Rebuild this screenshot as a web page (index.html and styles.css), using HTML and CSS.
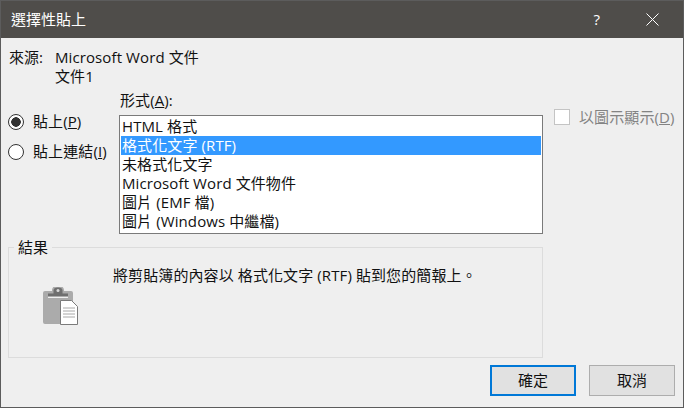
FILE: index.html
```html
<!DOCTYPE html>
<html lang="zh-Hant">
<head>
<meta charset="utf-8">
<title>選擇性貼上</title>
<link rel="stylesheet" href="styles.css">
</head>
<body>
<div class="dialog">
  <header class="titlebar">
    <span class="title">選擇性貼上</span>
    <span class="help">?</span>
    <svg class="close" width="13" height="13" viewBox="0 0 13 13"><path d="M.5.5l12 12M12.500.5l-12 12" stroke="#fff" stroke-width="1" fill="none"/></svg>
  </header>
  <main class="content">
    <div class="source">
      <span class="source-label">來源:</span>
      <div class="source-value"><div>Microsoft Word 文件</div><div>文件1</div></div>
    </div>
    <div class="middle">
      <div class="radios">
        <label class="radio-row"><span class="radio checked"></span><span>貼上(<u>P</u>)</span></label>
        <label class="radio-row"><span class="radio"></span><span>貼上連結(<u>I</u>)</span></label>
      </div>
      <div class="format">
        <div class="format-label">形式(<u>A</u>):</div>
        <ul class="listbox">
          <li>HTML 格式</li>
          <li class="selected">格式化文字 (RTF)</li>
          <li>未格式化文字</li>
          <li>Microsoft Word 文件物件</li>
          <li>圖片 (EMF 檔)</li>
          <li>圖片 (Windows 中繼檔)</li>
        </ul>
      </div>
      <div class="icon-option"><span class="checkbox"></span><span>以圖示顯示(<u>D</u>)</span></div>
    </div>
    <section class="result">
      <span class="legend">結果</span>
      <svg class="clip" width="36" height="38" viewBox="0 0 36 38">
        <path d="M3 4h7V3a5 4 0 0 1 12 0v1h7a2 2 0 0 1 2 2v29a2 2 0 0 1-2 2H3a2 2 0 0 1-2-2V6a2 2 0 0 1 2-2z" fill="#ababab"/>
        <path d="M6 9V6.500h5.500V3.500a4.500 3 0 0 1 9 0v3H26V9z" fill="#6f6f6f"/>
        <path d="M6 10.500h20" stroke="#efefef" stroke-width="1"/>
        <circle cx="16" cy="3.500" r="1.500" fill="#d8d8d8"/>
        <path d="M18.500 13.500h11l6 6v18h-17z" fill="#fff" stroke="#7b7b7b" stroke-width="1"/>
        <path d="M21 21h12M21 24h12M21 27h12M21 30h12" stroke="#a8a8a8" stroke-width="1"/>
      </svg>
      <p class="result-text">將剪貼簿的內容以 格式化文字 (RTF) 貼到您的簡報上。</p>
    </section>
    <footer class="buttons">
      <button class="btn primary">確定</button>
      <button class="btn">取消</button>
    </footer>
  </main>
</div>
</body>
</html>
```
FILE: styles.css
```css
* { box-sizing: border-box; }
html, body { margin: 0; padding: 0; }
body {
  width: 684px;
  height: 408px;
  overflow: hidden;
  font-family: "Open Sans", "Noto Sans CJK TC", sans-serif;
  font-size: 15px;
  letter-spacing: 0.1px;
  line-height: 19px;
  color: #111;
}
.dialog {
  width: 684px;
  height: 408px;
  background: #efefef;
  border: 1px solid #5c5c5c;
  display: flex;
  flex-direction: column;
}
.titlebar {
  height: 37px;
  flex: none;
  background: #4f4d4a;
  color: #fff;
  display: flex;
  align-items: center;
  padding: 0 24px 0 10px;
}
.title { flex: 1; letter-spacing: 0; }
.help { margin-right: 46px; }
.close { display: block; }
.content {
  flex: 1;
  display: flex;
  flex-direction: column;
  padding: 10px 7px 0;
  min-height: 0;
}
.source { display: flex; height: 38px; padding-left: 1px; }
.source-label { width: 46px; letter-spacing: 0; }
.middle { display: flex; margin-top: 6px; height: 141px; }
.radios {
  width: 111px;
  padding-top: 20px;
  display: flex;
  flex-direction: column;
  gap: 11px;
}
.radio-row { display: flex; align-items: center; height: 19px; gap: 9px; }
.radio {
  width: 16px;
  height: 16px;
  border-radius: 50%;
  border: 1px solid #333;
  background: #fff;
  flex: none;
}
.radio.checked {
  background: radial-gradient(circle, #333 0 4.500px, #fff 5px);
}
.format { width: 424px; flex: none; }
.format-label { height: 19px; margin: -1px 0 5px; padding-left: 1px; }
.listbox {
  list-style: none;
  margin: 0;
  padding: 1px 1px 0;
  height: 119px;
  background: #fff;
  border: 1px solid #7a7a7a;
}
.listbox li { height: 19px; padding-left: 1px; white-space: nowrap; }
.listbox .selected { background: #3399ff; color: #fff; }
.icon-option {
  display: flex;
  align-items: center;
  gap: 9px;
  height: 18px;
  margin: 16px 0 0 11px;
  color: #838383;
}
.checkbox {
  width: 16px;
  height: 16px;
  background: #fff;
  border: 1px solid #c4c4c4;
  flex: none;
}
.result {
  position: relative;
  height: 111px;
  margin-top: 14px;
  width: 535px;
  border: 1px solid #dcdcdc;
  display: flex;
  align-items: flex-start;
}
.legend {
  position: absolute;
  left: 5px;
  top: -10px;
  padding: 0 4px;
  background: #efefef;
  letter-spacing: 0;
}
.clip { margin: 39px 0 0 33px; flex: none; }
.result-text { margin: 18px 0 0 35px; white-space: nowrap; }
.buttons {
  display: flex;
  justify-content: flex-end;
  gap: 13px;
  margin-top: 7px;
  padding-right: 1px;
}
.btn {
  width: 86px;
  height: 31px;
  background: #e1e1e1;
  border: 1px solid #adadad;
  font: inherit;
  color: inherit;
  padding: 0;
}
.btn.primary { border: 2px solid #0078d7; }
```
